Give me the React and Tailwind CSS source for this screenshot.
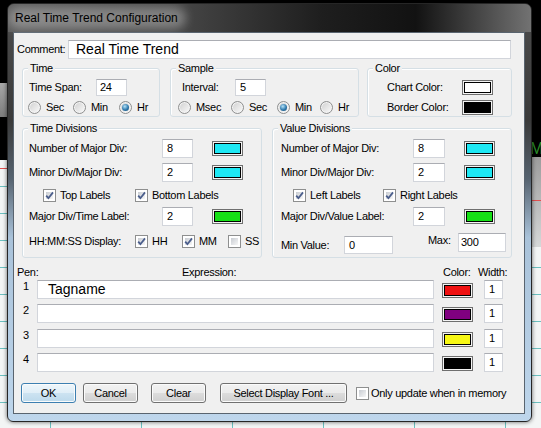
import React from "react";

function Field({ className = "", children }) {
  return (
    <div
      className={`bg-white border border-[#d2d5db] border-t-[#abadb3] flex items-center whitespace-nowrap overflow-hidden ${className}`}
    >
      {children}
    </div>
  );
}

function Swatch({ fill, className = "" }) {
  return (
    <span className={`w-[31px] h-[15px] border border-[#6f6f6f] bg-[#f4f4f4] p-[1px] flex shrink-0 ${className}`}>
      <span className={`flex-1 border border-black ${fill}`} />
    </span>
  );
}

function Radio({ checked }) {
  return (
    <span className="w-[13px] h-[13px] rounded-full border border-[#8e8f8f] bg-[linear-gradient(135deg,#cfcfcf,#fbfbfb)] shadow-[inset_0_0_0_1px_#f4f4f4] flex items-center justify-center shrink-0">
      {checked && (
        <span className="w-[7px] h-[7px] rounded-full bg-[radial-gradient(circle_at_40%_35%,#b5e2f7,#2f79ad_55%,#17496e)]" />
      )}
    </span>
  );
}

function RadioItem({ label, checked, className = "" }) {
  return (
    <span className={`flex items-center gap-[5px] ${className}`}>
      <Radio checked={checked} />
      <span>{label}</span>
    </span>
  );
}

function Check({ checked }) {
  return (
    <span className="relative w-[13px] h-[13px] border border-[#8e8f8f] bg-white p-[2px] flex shrink-0">
      <span className="flex-1 bg-[linear-gradient(135deg,#c8ccd2,#f7f7f7)]" />
      {checked && (
        <svg className="absolute -inset-px" viewBox="0 0 13 13" width="13" height="13">
          <path d="M3.2 6.6 L5.4 9.2 L10 3.4" fill="none" stroke="#4b5e8c" strokeWidth="1.8" />
        </svg>
      )}
    </span>
  );
}

function CheckItem({ label, checked, className = "" }) {
  return (
    <span className={`flex items-center gap-[4px] whitespace-nowrap ${className}`}>
      <Check checked={checked} />
      <span>{label}</span>
    </span>
  );
}

function Group({ label, className = "", children }) {
  return (
    <div className={`relative border border-[#d5dfe5] rounded-[3px] shadow-[inset_1px_1px_0_#fff] ${className}`}>
      <span className="absolute -top-[7px] left-[5px] px-[2px] bg-[#f0f0f0] leading-[13px]">{label}</span>
      {children}
    </div>
  );
}

function Btn({ children, primary, className = "" }) {
  const look = primary
    ? "border-[#3c7fb1] bg-[linear-gradient(#eef6fb_0%,#e0eef7_50%,#cde3f1_50%,#bcd9ec_100%)]"
    : "border-[#707070] bg-[linear-gradient(#f2f2f2_0%,#ebebeb_50%,#dddddd_50%,#cfcfcf_100%)]";
  return (
    <div
      className={`h-[20px] rounded-[3px] border shadow-[inset_0_0_0_1px_#fbfbfb] flex items-center justify-center whitespace-nowrap ${look} ${className}`}
    >
      {children}
    </div>
  );
}

function DivRow({ label, labelW, value, fill, inputW, className = "" }) {
  return (
    <div className={`flex items-center h-[19px] ${className}`}>
      <span className={labelW}>{label}</span>
      <Field className={`${inputW} h-[19px] pl-[4px]`}>{value}</Field>
      <Swatch fill={fill} className="ml-[19px]" />
    </div>
  );
}

const pens = [
  { n: "1", text: "Tagname", fill: "bg-[#f01212]", mt: "mt-[1px]" },
  { n: "2", text: "", fill: "bg-[#800080]", mt: "mt-[5px]" },
  { n: "3", text: "", fill: "bg-[#f7f714]", mt: "mt-[6px]" },
  { n: "4", text: "", fill: "bg-black", mt: "mt-[5px]" },
];

export default function App() {
  return (
    <div className="relative w-[541px] h-[428px] overflow-hidden bg-black font-['Liberation_Sans',Arial,sans-serif] text-[11px] tracking-[-0.3px] leading-[13px] text-black">
      {/* desktop behind the dialog */}
      <div className="absolute left-0 right-0 top-[160px] bottom-0 bg-[#f3f5f5] bg-[repeating-linear-gradient(180deg,transparent_0_26px,#6cc0c0_26px_27px),repeating-linear-gradient(90deg,transparent_0_50px,#6cc0c0_50px_51px,transparent_51px_91px)]" />
      <div className="absolute right-0 top-[157px] w-[10px] h-[90px] bg-[linear-gradient(180deg,#9c9c9c,#d6d8d8)]" />
      <div className="absolute left-0 top-[83px] w-[8px] h-[34px] bg-[linear-gradient(180deg,#a8a8a8,#7d7d7d)]" />
      <div className="absolute left-0 top-[168px] w-[8px] h-px bg-[#e05050]" />
      <div className="absolute right-0 top-[200px] w-[10px] h-px bg-[#e05050]" />
      <span className="absolute left-[530px] top-[142px] text-[16px] tracking-normal text-[#2b8f2b]">M</span>

      {/* dialog window */}
      <div className="relative z-10 ml-[7px] mt-[3px] w-[525px] h-[419px] rounded-t-[7px] rounded-b-[6px] border border-[#262626] shadow-[0_0_4px_rgba(0,0,0,0.6)] bg-[linear-gradient(180deg,#4d4d4d_0%,#3a3a3a_28%,#566370_42%,#a9c2d9_56%,#bed6ec_100%)] flex flex-col overflow-hidden">
        <div className="relative h-[28px] shrink-0 flex items-center pl-[7px] bg-[linear-gradient(90deg,#5c5c5c_0%,#4a4a4a_30%,#1e1e1e_60%,#121212_78%,#727272_100%)]">
          <span className="absolute left-[0px] top-[3px] w-[178px] h-[22px] rounded-[11px] bg-white/30 blur-[5px]" />
          <span className="relative text-[12px] tracking-normal">Real Time Trend Configuration</span>
        </div>

        <div className="ml-[5px] w-[512px] h-[382px] bg-[#f0f0f0] border border-[#59646f] flex flex-col">
          {/* comment */}
          <div className="mt-[7px] flex items-center h-[19px]">
            <span className="w-[54px] pl-[3px] whitespace-nowrap">Comment:</span>
            <Field className="w-[443px] h-[19px] pl-[7px] text-[14px] tracking-normal">Real Time Trend</Field>
          </div>

          {/* time / sample / color */}
          <div className="mt-[9px] flex pl-[8px]">
            <Group label="Time" className="w-[138px] h-[49px] pt-[10px] pl-[6px]">
              <div className="flex items-center h-[17px]">
                <span className="w-[67px]">Time Span:</span>
                <Field className="w-[31px] h-[17px] pl-[3px]">24</Field>
              </div>
              <div className="mt-[4px] flex items-center h-[14px] -ml-[1px]">
                <RadioItem label="Sec" className="w-[45px]" />
                <RadioItem label="Min" className="w-[46px]" />
                <RadioItem label="Hr" checked />
              </div>
            </Group>

            <Group label="Sample" className="ml-[10px] w-[189px] h-[49px] pt-[10px]">
              <div className="flex items-center h-[17px] pl-[11px]">
                <span className="w-[53px]">Interval:</span>
                <Field className="w-[31px] h-[17px] pl-[4px]">5</Field>
              </div>
              <div className="mt-[4px] flex items-center h-[14px] pl-[7px]">
                <RadioItem label="Msec" className="w-[53px]" />
                <RadioItem label="Sec" className="w-[46px]" />
                <RadioItem label="Min" checked className="w-[43px]" />
                <RadioItem label="Hr" />
              </div>
            </Group>

            <Group label="Color" className="ml-[8px] w-[145px] h-[49px] pt-[11px] pl-[19px]">
              <div className="flex items-center h-[15px]">
                <span className="w-[75px]">Chart Color:</span>
                <Swatch fill="bg-white" />
              </div>
              <div className="mt-[5px] flex items-center h-[15px]">
                <span className="w-[75px]">Border Color:</span>
                <Swatch fill="bg-black" />
              </div>
            </Group>
          </div>

          {/* divisions */}
          <div className="mt-[11px] flex pl-[8px]">
            <Group label="Time Divisions" className="w-[240px] h-[130px] pt-[10px] pl-[6px]">
              <DivRow label="Number of Major Div:" labelW="w-[133px]" inputW="w-[31px]" value="8" fill="bg-[#1ee8f4]" />
              <DivRow label="Minor Div/Major Div:" labelW="w-[133px]" inputW="w-[31px]" value="2" fill="bg-[#1ee8f4]" className="mt-[5px]" />
              <div className="mt-[6px] h-[14px] flex items-center pl-[14px]">
                <CheckItem label="Top Labels" checked className="w-[92px]" />
                <CheckItem label="Bottom Labels" checked />
              </div>
              <DivRow label="Major Div/Time Label:" labelW="w-[133px]" inputW="w-[31px]" value="2" fill="bg-[#16e016]" className="mt-[5px]" />
              <div className="mt-[8px] h-[14px] flex items-center">
                <span className="w-[106px] whitespace-nowrap">HH:MM:SS Display:</span>
                <CheckItem label="HH" checked className="w-[47px]" />
                <CheckItem label="MM" checked className="w-[46px]" />
                <CheckItem label="SS" />
              </div>
            </Group>

            <Group label="Value Divisions" className="ml-[10px] w-[240px] h-[130px] pt-[10px] pl-[8px]">
              <DivRow label="Number of Major Div:" labelW="w-[132px]" inputW="w-[32px]" value="8" fill="bg-[#1ee8f4]" />
              <DivRow label="Minor Div/Major Div:" labelW="w-[132px]" inputW="w-[32px]" value="2" fill="bg-[#1ee8f4]" className="mt-[5px]" />
              <div className="mt-[6px] h-[14px] flex items-center pl-[12px]">
                <CheckItem label="Left Labels" checked className="w-[90px]" />
                <CheckItem label="Right Labels" checked />
              </div>
              <DivRow label="Major Div/Value Label:" labelW="w-[132px]" inputW="w-[32px]" value="2" fill="bg-[#16e016]" className="mt-[5px]" />
              <div className="mt-[7px] flex items-start">
                <span className="w-[63px] mt-[6px]">Min Value:</span>
                <Field className="w-[49px] h-[18px] mt-[3px] pl-[4px]">0</Field>
                <span className="ml-[35px] w-[30px] mt-[1px]">Max:</span>
                <Field className="w-[48px] h-[19px] pl-[2px]">300</Field>
              </div>
            </Group>
          </div>

          {/* pens */}
          <div className="mt-[7px] h-[14px] flex items-center">
            <span className="w-[168px] pl-[3px]">Pen:</span>
            <span className="w-[261px]">Expression:</span>
            <span className="w-[35px]">Color:</span>
            <span>Width:</span>
          </div>
          {pens.map((p) => (
            <div key={p.n} className={`flex items-start h-[19px] ${p.mt}`}>
              <span className="w-[23px] pl-[9px]">{p.n}</span>
              <Field className="w-[397px] h-[19px] pl-[10px] text-[14px] tracking-normal">{p.text}</Field>
              <Swatch fill={p.fill} className="ml-[8px] mt-[3px]" />
              <Field className="ml-[11px] w-[19px] h-[19px] pl-[4px]">1</Field>
            </div>
          ))}

          {/* buttons */}
          <div className="mt-[11px] flex items-center pl-[7px]">
            <Btn primary className="w-[55px]">OK</Btn>
            <Btn className="ml-[7px] w-[55px]">Cancel</Btn>
            <Btn className="ml-[13px] w-[55px]">Clear</Btn>
            <Btn className="ml-[14px] w-[127px]">Select Display Font ...</Btn>
            <span className="ml-[9px] flex items-center gap-[2px] whitespace-nowrap">
              <Check />
              <span>Only update when in memory</span>
            </span>
          </div>
        </div>
      </div>
    </div>
  );
}
